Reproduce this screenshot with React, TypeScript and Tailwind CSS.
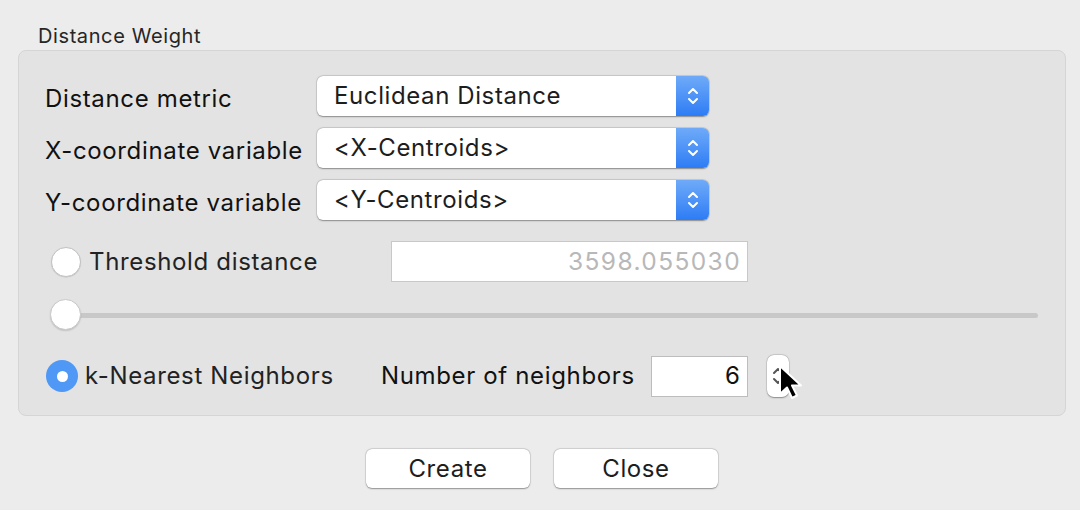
const font = { fontFamily: "Inter, 'Helvetica Neue', 'Liberation Sans', sans-serif" };

const Chevrons = ({ color }: { color: string }) => (
  <svg width="14" height="24" viewBox="0 0 14 24" fill="none">
    <path d="M3 9 L7 5 L11 9" stroke={color} strokeWidth="2" strokeLinecap="round" strokeLinejoin="round" />
    <path d="M3 15 L7 19 L11 15" stroke={color} strokeWidth="2" strokeLinecap="round" strokeLinejoin="round" />
  </svg>
);

const Select = ({ value }: { value: string }) => (
  <div className="flex h-[40px] w-[392px] overflow-hidden rounded-[6px] bg-white shadow-[0_0.5px_1.5px_rgba(0,0,0,0.35),0_0_0_0.5px_rgba(0,0,0,0.12)]">
    <div className="flex flex-1 items-center pl-[17px] text-[24px] tracking-[0.6px] text-[#1d1d1d]">{value}</div>
    <div className="flex w-[33px] items-center justify-center bg-gradient-to-b from-[#6eaaf8] to-[#2c7cf5]">
      <Chevrons color="#ffffff" />
    </div>
  </div>
);

const Row = ({ label, value }: { label: string; value: string }) => (
  <div className="flex h-[40px] items-center">
    <div className="w-[272px] pt-[5px] text-[24px] leading-[28px] tracking-[0.65px] text-[#111]">{label}</div>
    <Select value={value} />
  </div>
);

const Cursor = () => (
  <svg className="absolute left-[778px] top-[364px]" width="30" height="40" viewBox="0 0 30 40">
    <path d="M2 2 L2 30 L9 23.5 L14 34 L19 31.5 L14 21.5 L23 21.5 Z" fill="#000" stroke="#fff" strokeWidth="2" strokeLinejoin="round" />
  </svg>
);

export default function App() {
  return (
    <div className="relative h-[510px] w-[1080px] overflow-hidden bg-[#ececec]" style={font}>
      <div className="pl-[38px] pt-[24px] text-[20px] leading-[24px] tracking-[0.6px] text-[#262626]">Distance Weight</div>
      <div className="ml-[18px] mt-[2px] h-[366px] w-[1048px] rounded-[8px] border border-[#d5d5d5] bg-[#e3e3e3] pl-[26px] pt-[25px]">
        <div className="flex flex-col gap-[12px]">
          <Row label="Distance metric" value="Euclidean Distance" />
          <Row label="X-coordinate variable" value="<X-Centroids>" />
          <Row label="Y-coordinate variable" value="<Y-Centroids>" />
        </div>

        <div className="mt-[21px] flex items-center">
          <div className="ml-[6px] h-[30px] w-[30px] rounded-full border border-[#c2c2c2] bg-white shadow-[0_0.5px_1px_rgba(0,0,0,0.15)]" />
          <div className="ml-[8px] w-[302px] text-[24px] tracking-[0.65px] text-[#222]">Threshold distance</div>
          <div className="flex h-[41px] w-[357px] items-center justify-end border border-[#c8c8c8] bg-white pr-[6px] text-[24.5px] tracking-[1.4px] text-[#b8b8b8]">
            3598.055030
          </div>
        </div>

        <div className="relative mt-[16px] h-[32px] w-[993px]">
          <div className="absolute left-[20px] right-0 top-[15px] h-[5px] rounded-full bg-[#c8c8c8]" />
          <div className="absolute left-[5px] top-[1px] h-[31px] w-[31px] rounded-full border border-[#c9c9c9] bg-white shadow-[0_1px_1.5px_rgba(0,0,0,0.15)]" />
        </div>

        <div className="mt-[25px] flex items-center">
          <div className="ml-[1px] flex h-[32px] w-[32px] items-center justify-center rounded-full bg-[#4f98f6]">
            <div className="h-[11px] w-[11px] rounded-full bg-white" />
          </div>
          <div className="ml-[7px] w-[296px] text-[24px] tracking-[0.65px] text-[#222]">k-Nearest Neighbors</div>
          <div className="w-[270px] text-[24px] tracking-[0.65px] text-[#111]">Number of neighbors</div>
          <div className="flex h-[41px] w-[97px] items-center justify-end border border-[#bdbdbd] bg-white pr-[7px] text-[24px] text-[#111]">
            6
          </div>
          <div className="ml-[19px] flex h-[42px] w-[22px] items-center justify-center rounded-[7px] bg-white shadow-[0_0.5px_1.5px_rgba(0,0,0,0.35),0_0_0_0.5px_rgba(0,0,0,0.12)]">
            <Chevrons color="#555" />
          </div>
        </div>
      </div>

      <div className="mt-[33px] flex justify-center gap-[24px] pl-[4px]">
        <button className="h-[39px] w-[164px] rounded-[6px] bg-white text-[24px] tracking-[0.6px] text-[#1d1d1d] shadow-[0_0.5px_1.5px_rgba(0,0,0,0.35),0_0_0_0.5px_rgba(0,0,0,0.12)]">
          Create
        </button>
        <button className="h-[39px] w-[164px] rounded-[6px] bg-white text-[24px] tracking-[0.6px] text-[#1d1d1d] shadow-[0_0.5px_1.5px_rgba(0,0,0,0.35),0_0_0_0.5px_rgba(0,0,0,0.12)]">
          Close
        </button>
      </div>

      <Cursor />
    </div>
  );
}
